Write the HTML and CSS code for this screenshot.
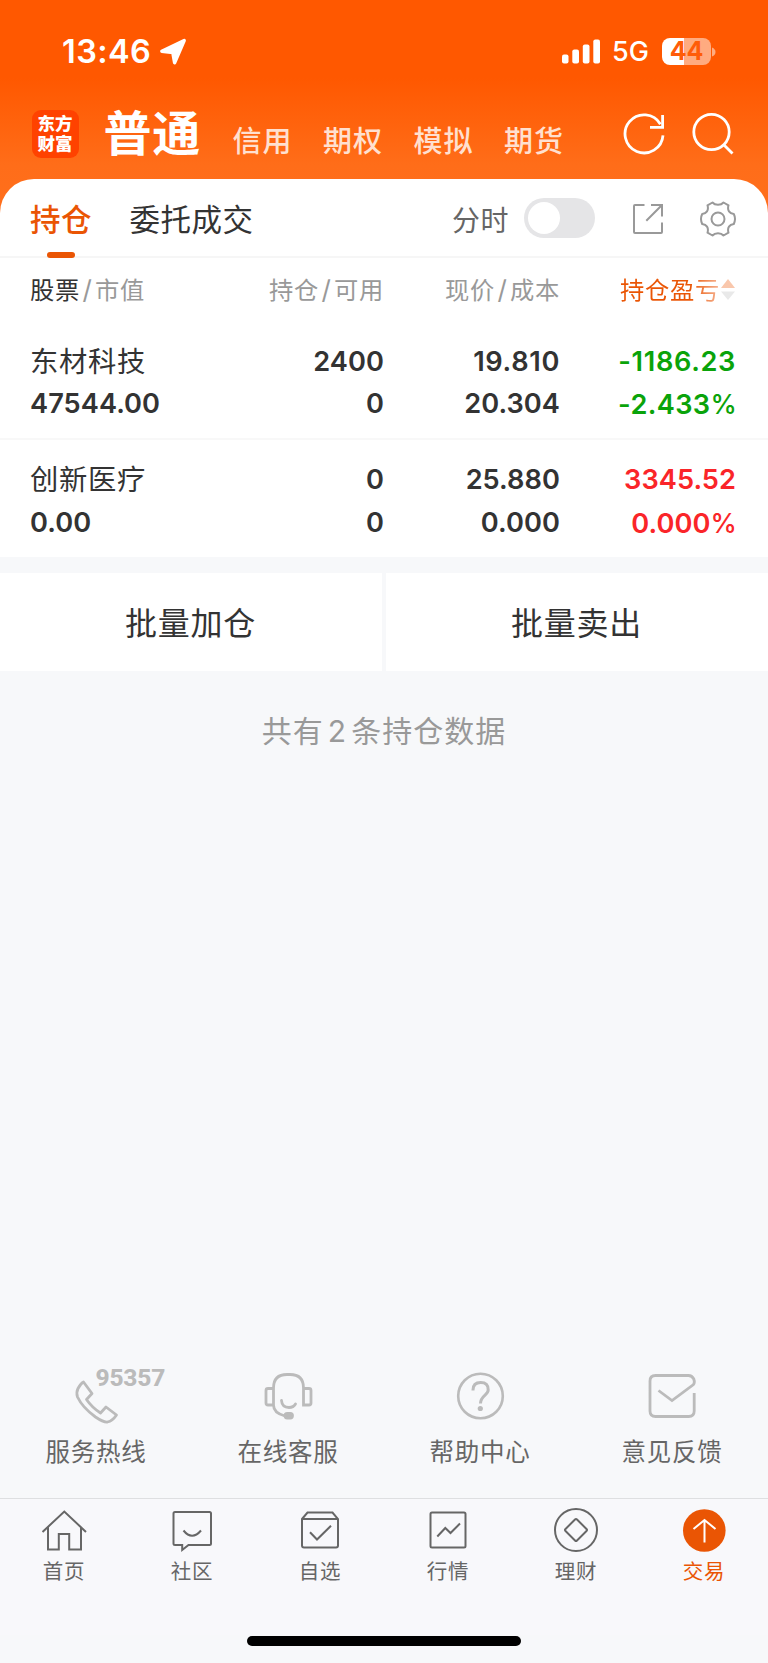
FILE: index.html
```html
<!DOCTYPE html>
<html lang="zh-CN">
<head>
<meta charset="utf-8">
<title>持仓</title>
<link rel="stylesheet" href="styles.css">
</head>
<body>
<div class="screen">
  <header class="hero">
    <div class="status">
      <span class="clock">13:46</span>
      <svg class="loc" width="28" height="28" viewBox="0 0 28 28"><path d="M25.2 2.5 15.6 24.8 13.8 14.6 2.8 13.2Z" fill="#fff" stroke="#fff" stroke-width="3.400" stroke-linejoin="round"/></svg>
      <svg class="signal" width="40" height="26" viewBox="0 0 40 26" fill="#fff"><rect x="0" y="15.500" width="6.500" height="9" rx="2"/><rect x="10.300" y="10.500" width="6.700" height="14" rx="2"/><rect x="20.800" y="5.500" width="6.700" height="19" rx="2"/><rect x="31.300" y="0.500" width="6.700" height="24" rx="2"/></svg>
      <span class="net">5G</span>
      <div class="battery"><span>44</span></div>
      <svg class="cap" width="4" height="10" viewBox="0 0 4 10"><path d="M0 .5Q3.500 2 3.500 5T0 9.500Z" fill="#fff" opacity=".5"/></svg>
    </div>
    <nav class="accounts">
      <div class="logo"><span>东方财富</span></div>
      <span class="current">普通</span>
      <div class="others"><span>信用</span><span>期权</span><span>模拟</span><span>期货</span></div>
      <svg class="refresh" width="44" height="44" viewBox="0 0 44 44" fill="none" stroke="#fff" stroke-width="2.800"><path d="M41 23.300A19 19 0 1 1 38.400 12.200"/><path d="M40.600 3V15.300H28"/></svg>
      <svg class="search" width="44" height="44" viewBox="0 0 44 44" fill="none" stroke="#fff" stroke-width="2.800"><circle cx="20.500" cy="20" r="17.700"/><path d="M32.500 32.500 41.500 41.500"/></svg>
    </nav>
  </header>

  <main class="sheet">
    <div class="tabs">
      <div class="tab active">持仓</div>
      <div class="tab">委托成交</div>
      <div class="minute">分时</div>
      <div class="toggle"><i></i></div>
      <svg class="share" width="32" height="32" viewBox="0 0 32 32" fill="none" stroke="#999" stroke-width="2"><path d="M12.500 2H3Q2 2 2 3V29Q2 30 3 30H29Q30 30 30 29V19.500"/><path d="M19 2H30V13.500M30 2 14.300 17.800"/></svg>
      <svg class="gear" width="36" height="36" viewBox="0 0 36 36" fill="none" stroke="#999" stroke-width="2"><circle cx="18" cy="18" r="6.500"/><path d="M12.500 1.500C15 4.500 21 4.500 23.500 1.500L28.500 4.300C27 9.500 29.500 12.300 33.800 13Q36.200 18 33.800 23C29.500 23.700 27 26.500 28.500 31.700L23.500 34.500C21 31.500 15 31.500 12.500 34.500L7.500 31.700C9 26.500 6.500 23.700 2.200 23Q-.2 18 2.200 13C6.500 12.300 9 9.500 7.500 4.300Z" stroke-linejoin="round"/></svg>
    </div>
    <div class="grid head">
      <div><b>股票</b><em>/</em>市值</div>
      <div>持仓<em>/</em>可用</div>
      <div>现价<em>/</em>成本</div>
      <div class="profit"><span>持仓盈亏</span><svg width="16" height="22" viewBox="0 0 16 22"><path d="M8 0 15 9H1Z" fill="#f9c7ac"/><path d="M1 12.500H15L8 21Z" fill="#e9e9e9"/></svg></div>
    </div>
    <div class="grid row first">
      <div><p class="name">东材科技</p><p>47544.00</p></div>
      <div><p>2400</p><p>0</p></div>
      <div><p class="ones">19.810</p><p>20.304</p></div>
      <div class="down"><p class="ones">-1186.23</p><p class="wide">-2.433<i>%</i></p></div>
    </div>
    <div class="grid row">
      <div><p class="name">创新医疗</p><p>0.00</p></div>
      <div><p>0</p><p>0</p></div>
      <div><p>25.880</p><p>0.000</p></div>
      <div class="up"><p>3345.52</p><p>0.000<i>%</i></p></div>
    </div>
  </main>

  <div class="batch"><div>批量加仓</div><div>批量卖出</div></div>
  <p class="total">共有<em>2</em>条持仓数据</p>

  <section class="services">
    <div class="hotline">
      <svg width="96" height="62" viewBox="0 0 96 62" fill="none" stroke="#bbb" stroke-width="2.800" stroke-linejoin="round"><path d="M36 19.500 44.500 31 39 37Q44.500 45 53 50.500L58.500 44.500 69 52.500Q65 58.500 60 59.500Q56 60 48 54.500Q35 45 30 34.500Q28.500 30 30.500 26Q33 21 36 19.500Z" transform="translate(-.5 -1.500)"/></svg>
      <span class="number">95357</span>
      <p>服务热线</p>
    </div>
    <div>
      <svg width="96" height="62" viewBox="0 0 96 62" fill="none" stroke="#bbb" stroke-width="2.800"><path d="M33.500 42V24Q33.500 10.500 47 10.500H50Q63.500 10.500 63.500 24V41H69Q71 41 71 39V26.500Q71 24.500 69 24.500H63.500M33.500 24.500H28Q26 24.500 26 26.500V39Q26 41 28 41H33.500Q33.500 49 45 52"/><path d="M41.500 36.500Q42 43.500 49 43.500Q53.500 43.500 55.500 40" stroke-linecap="round"/><rect x="45" y="49.500" width="7.500" height="4.500" rx="2.200" fill="#bbb"/></svg>
      <p>在线客服</p>
    </div>
    <div>
      <svg width="96" height="62" viewBox="0 0 96 62" fill="none" stroke="#bbb" stroke-width="2.600"><circle cx="48.500" cy="32" r="22.300"/><path d="M41 26.500V26Q41 18.500 48.700 18.500T56.200 26C56.200 31 48.500 31.500 48.500 39.500" stroke-width="3"/><circle cx="48.300" cy="44.500" r="2.600" fill="#bbb" stroke="none"/></svg>
      <p>帮助中心</p>
    </div>
    <div>
      <svg width="96" height="62" viewBox="0 0 96 62" fill="none" stroke="#bbb" stroke-width="2.800"><path d="M70.200 29V47Q70.200 52.500 64.700 52.500H31.500Q26 52.500 26 47V17Q26 11.500 31.500 11.500H64.500Q68 11.500 69.800 15Q71 18.500 69.500 20.500L48 36.500 34.500 26.500"/></svg>
      <p>意见反馈</p>
    </div>
  </section>

  <nav class="bottom">
    <div><svg width="48" height="48" viewBox="0 0 48 48"><path d="M2.500 24 24.300 3.500 46 24M8 19V41.500H18.800V26H29.200V41.500H41V19"/></svg><p>首页</p></div>
    <div><svg width="48" height="48" viewBox="0 0 48 48"><path d="M7 4H41.500Q43 4 43 5.500V35.500Q43 37 41.500 37H20.500L14.200 42V37H7Q5.500 37 5.500 35.500V5.500Q5.500 4 7 4Z"/><path d="M15.500 22.500Q24 33 33 22.500"/></svg><p>社区</p></div>
    <div><svg width="48" height="48" viewBox="0 0 48 48"><path d="M6 11 11.500 4.500H36.500L42 11V37.500Q42 39.500 40 39.500H8Q6 39.500 6 37.500ZM6 11H42"/><path d="M14 24.300 21 31.500 35 17.800"/></svg><p>自选</p></div>
    <div><svg width="48" height="48" viewBox="0 0 48 48"><rect x="6.500" y="4.500" width="35" height="35" rx="1.500"/><path d="M13.300 28.500 21.300 20 26.500 25 36 15.500"/></svg><p>行情</p></div>
    <div><svg width="48" height="48" viewBox="0 0 48 48"><circle cx="24" cy="22" r="21"/><path d="M23 11.500Q24 10.500 25 11.500L34.500 21Q35.500 22 34.500 23L25 32.500Q24 33.500 23 32.500L13.500 23Q12.500 22 13.500 21Z"/></svg><p>理财</p></div>
    <div class="on"><svg width="48" height="48" viewBox="0 0 48 48"><circle cx="24.300" cy="22.500" r="21.300" fill="#ea5504" stroke="none"/><path d="M24.500 34.500V12M13.500 21 24.500 12 35.500 21" stroke="#fff"/></svg><p>交易</p></div>
  </nav>
  <div class="homebar"></div>
</div>
</body>
</html>
```
FILE: styles.css
```css
* { box-sizing: border-box; }
body, p { margin: 0; }
body { font-family: Inter, "Noto Sans CJK SC", sans-serif; color: #333; background: #f7f8fa; }
svg { display: block; flex: none; }
em, i { font-style: normal; }
.screen { width: 768px; height: 1663px; display: flex; flex-direction: column; overflow: hidden; background: #f7f8fa; white-space: nowrap; }

.hero { height: 213px; flex: none; background: linear-gradient(#ff5800 0 78px, #ff6d19 165px, #ff6f1c); color: #fff; }
.status { display: flex; align-items: center; height: 103px; padding-left: 62px; }
.clock { width: 97px; font-size: 32.5px; font-weight: 600; letter-spacing: .4px; }
.signal { margin-left: 375px; }
.net { width: 50px; margin-left: 10px; font-size: 27px; font-weight: 500; }
.battery { width: 49px; height: 27px; border-radius: 8px; background: linear-gradient(90deg, #fff 22px, #ffab80 22px); color: #ff5c08; font-size: 25px; line-height: 27px; font-weight: 700; text-align: center; letter-spacing: -.2px; }
.cap { margin-left: 1px; }
.accounts { display: flex; height: 62px; align-items: center; padding-left: 31.500px; }
.logo { width: 47px; height: 48px; padding: 3px 0 0 6px; border-radius: 9px; background: #ff4200; font: 900 17.500px/20px "Noto Sans CJK SC", sans-serif; }
.logo span { display: block; width: 36px; white-space: normal; word-break: break-all; }
.current { margin-left: 25px; width: 104px; font-size: 48px; line-height: 62px; font-weight: 700; letter-spacing: .8px; }
.others { display: flex; gap: 30.500px; padding-top: 16px; width: 389px; margin-left: 25px; font-size: 29px; line-height: 36px; font-weight: 500; letter-spacing: 1px; color: #ffe0d0; }
.search { margin-left: 25px; }

.sheet { flex: none; height: 378px; margin-top: -34px; background: #fff; border-radius: 34px 34px 0 0; }
.tabs { display: flex; align-items: center; height: 79px; padding-left: 30px; border-bottom: 2px solid #f6f6f6; }
.tab { position: relative; font-size: 30.500px; line-height: 78px; padding-top: 2px; margin-bottom: -2px; height: 80px; letter-spacing: .5px; }
.tab + .tab { margin-left: 37.500px; }
.active { color: #ea5504; font-weight: 500; }
.active::after { content: ""; position: absolute; left: 17px; bottom: 1px; width: 28px; height: 6px; border-radius: 3px; background: #ea5504; }
.minute { margin-left: auto; padding-top: 2px; font-size: 28px; letter-spacing: .5px; color: #666; }
.toggle { width: 71px; height: 40px; margin: 1px 0 0 15px; border-radius: 20px; background: #e5e5e7; padding: 4px; }
.toggle i { display: block; width: 32px; height: 32px; border-radius: 50%; background: #fff; }
.share { margin: 2px 0 0 37px; }
.gear { margin: 2px 32px 0 36px; }

.grid { display: grid; grid-template-columns: 180px 174px 176px 176px; padding-left: 30px; text-align: right; }
.grid > :first-child { text-align: left; }
.head { height: 64px; font-size: 24.300px; line-height: 63px; letter-spacing: .7px; color: #999; }
.head em { margin: 0 2.500px; font-size: 26px; }
.head b { font-weight: 400; color: #333; }
.profit { display: flex; align-items: center; justify-content: flex-end; margin-right: -1px; padding-right: 1px; color: #ea5504; }
.profit span { background: linear-gradient(90deg, #ea5504 70%, #f6b595); background-clip: text; color: transparent; }
.row { height: 118px; padding-top: 19px; font-size: 27.200px; line-height: 42.700px; font-weight: 600; letter-spacing: .05px; }
.row.first { padding-top: 18.500px; border-bottom: 2px solid #f8f8f8; }
.row .ones { letter-spacing: .65px; }
.row .wide { letter-spacing: .35px; }
.row i { font-size: 26.500px; font-weight: 500; letter-spacing: -.8px; }
.row .name { font-weight: 400; letter-spacing: .7px; font-size: 28.300px; }
.down { color: #0aa30a; }
.up { color: #fa2529; }

.batch { flex: none; display: grid; grid-template-columns: 1fr 1fr; gap: 4px; margin-top: 16px; height: 98px; text-align: center; font-size: 32px; line-height: 94px; letter-spacing: .7px; }
.batch div { background: #fff; padding: 4px 1px 0 0; }
.total { margin-top: 36px; text-align: center; font-size: 30px; line-height: 48px; letter-spacing: 1px; color: #999; }
.total em { margin: 0 4px; }

.services { display: grid; grid-template-columns: repeat(4, 192px); margin-top: auto; height: 134px; flex: none; text-align: center; font-size: 24.500px; color: #666; letter-spacing: .7px; }
.services > div { position: relative; }
.services svg { margin: 0 auto; }
.services p { line-height: 52px; }
.number { position: absolute; left: 95.500px; top: -1px; font: 800 24.500px/30px Roboto, sans-serif; letter-spacing: -.2px; color: #bbb; }
.bottom { display: grid; grid-template-columns: repeat(6, 128px); flex: none; height: 137px; padding-top: 9px; border-top: 1px solid #dedfe1; background: #f8f8fb; color: #666; text-align: center; font-size: 20.500px; letter-spacing: .7px; }
.bottom svg { margin: 0 auto; fill: none; stroke: #666; stroke-width: 2; }
.bottom p { line-height: 32px; }
.bottom .on { color: #ea5504; }
.homebar { flex: none; width: 274px; height: 10px; border-radius: 5px; background: #000; margin: 1px auto 17px; }
```
